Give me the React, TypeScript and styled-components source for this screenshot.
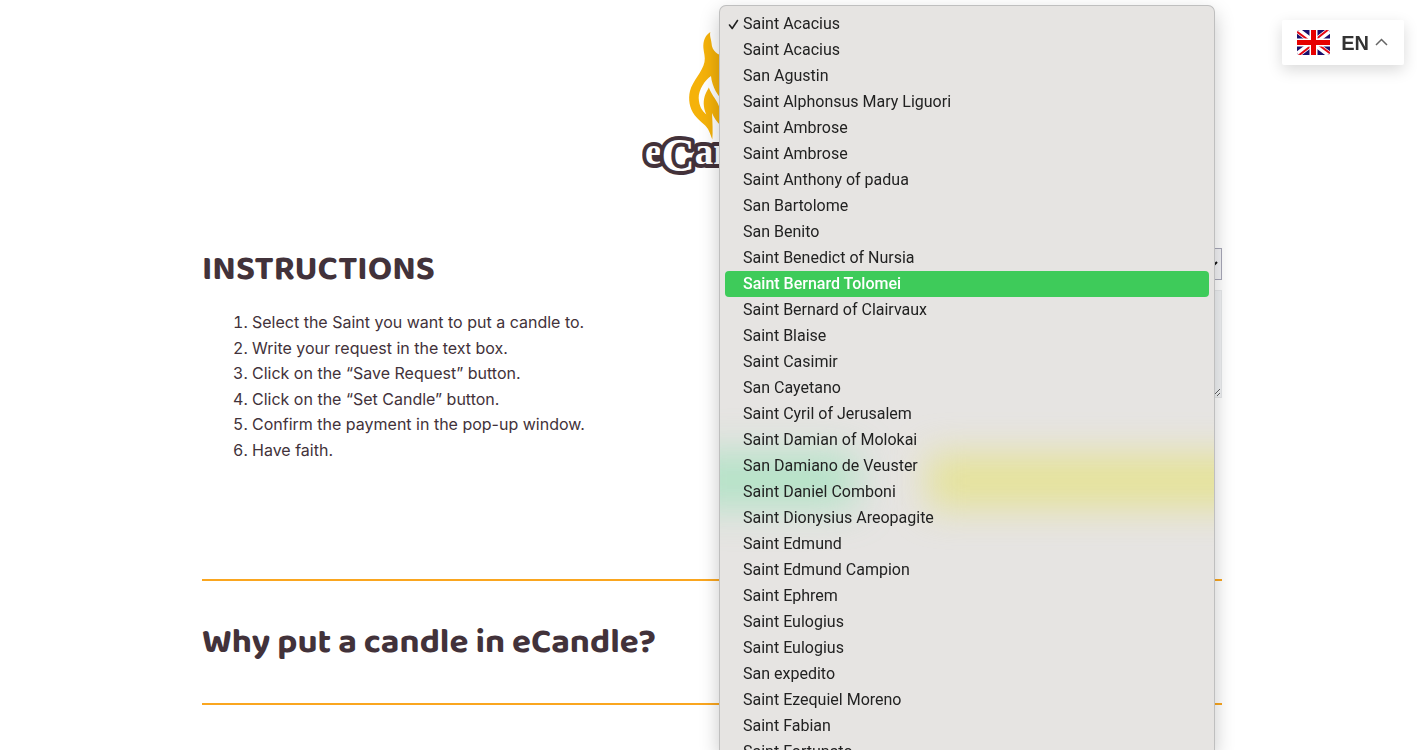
import React from "react";
import styled, { createGlobalStyle } from "styled-components";

const GlobalStyle = createGlobalStyle`
  *, *::before, *::after { box-sizing: border-box; }
  body {
    margin: 0;
    background: #fff;
    color: #42323a;
    font-family: Inter, "Liberation Sans", sans-serif;
    font-size: 16px;
    overflow: hidden;
  }
`;

const Page = styled.div`
  height: 100vh;
  overflow: hidden;
  padding-left: 7px;
`;

const Container = styled.main`
  width: 100%;
  max-width: 1020px;
  margin: 0 auto;
`;

const Header = styled.header`
  display: flex;
  justify-content: center;
  padding: 30px 0 68px;
`;

const Logo = styled.svg`
  display: block;
  width: 140px;
  height: 150px;
`;

const Columns = styled.section`
  display: grid;
  grid-template-columns: 1fr 1fr;
  gap: 20px;
  min-height: 331px;
`;

const Heading = styled.h2`
  margin: 0;
  font-family: "Baloo 2", Inter, sans-serif;
  font-size: 35px;
  font-weight: 700;
  line-height: 42px;
`;

const Steps = styled.ol`
  margin: 20px 0 0;
  padding-left: 50px;
  font-size: 16px;
  line-height: 1.6;
`;

const Form = styled.form`
  display: flex;
  flex-direction: column;
  gap: 10px;
`;

const SelectField = styled.div`
  display: grid;
  align-items: center;
  justify-items: end;
`;

const Select = styled.select`
  grid-area: 1 / 1;
  width: 100%;
  height: 32px;
  appearance: none;
  padding: 0 24px 0 8px;
  border: 1px solid #a8a8b8;
  border-radius: 0;
  background: #f3f3f6;
  font: inherit;
`;

const SelectArrow = styled.svg`
  grid-area: 1 / 1;
  width: 10px;
  height: 6px;
  margin-right: 4px;
  pointer-events: none;
`;

const Request = styled.textarea`
  display: block;
  width: 100%;
  height: 108px;
  border: 1px solid #e6e8ea;
  background: #f0f2f4;
  resize: vertical;
`;

const Question = styled.section`
  border-top: 2px solid #faa61f;
  padding: 40px 0;

  &:last-child { padding-bottom: 0; }
`;

const Menu = styled.ul`
  position: fixed;
  z-index: 2;
  top: 5px;
  width: 496px;
  height: calc(100vh - 5px);
  margin: 0 0 0 -3px;
  padding: 5px 5px 0;
  overflow: hidden;
  list-style: none;
  background: #e6e4e2;
  border: 1px solid #bfbfbf;
  border-bottom: 0;
  border-radius: 7px 7px 0 0;
  box-shadow: 0 8px 20px rgba(0, 0, 0, 0.22);
`;

const MenuAnchor = styled.div`
  grid-area: 1 / 1;
  justify-self: start;
`;

const Glow = styled.li<{ $color: string; $left: number; $top: number; $width: number; $height: number; $blur: number }>`
  position: absolute;
  left: ${(p) => p.$left}px;
  top: ${(p) => p.$top}px;
  width: ${(p) => p.$width}px;
  height: ${(p) => p.$height}px;
  background: ${(p) => p.$color};
  filter: blur(${(p) => p.$blur}px);
`;

const Option = styled.li<{ $active?: boolean }>`
  position: relative;
  height: 26px;
  padding-left: 18px;
  border-radius: 4px;
  font-family: Roboto, Inter, sans-serif;
  font-size: 16px;
  font-weight: ${(p) => (p.$active ? 500 : 400)};
  line-height: 25px;
  color: ${(p) => (p.$active ? "#fff" : "#222")};
  background: ${(p) => (p.$active ? "#3ecb5a" : "transparent")};
`;

const Check = styled.svg`
  position: absolute;
  left: 3px;
  top: 8px;
  width: 11px;
  height: 11px;
`;

const Language = styled.button`
  position: fixed;
  z-index: 3;
  top: 20px;
  right: 13px;
  display: flex;
  align-items: center;
  height: 45px;
  padding: 0 16px 0 15px;
  border: 0;
  border-radius: 2px;
  background: #fff;
  box-shadow: 0 5px 15px rgba(0, 0, 0, 0.15);
  color: #333;
  font: bold 20px/24px "Liberation Sans", sans-serif;
`;

const Flag = styled.svg`
  width: 33px;
  height: 25px;
  margin-right: 11px;
`;

const Caret = styled.svg`
  width: 13px;
  height: 8px;
  margin: 0 0 2px 6px;
`;

const saints = [
  "Saint Acacius",
  "Saint Acacius",
  "San Agustin",
  "Saint Alphonsus Mary Liguori",
  "Saint Ambrose",
  "Saint Ambrose",
  "Saint Anthony of padua",
  "San Bartolome",
  "San Benito",
  "Saint Benedict of Nursia",
  "Saint Bernard Tolomei",
  "Saint Bernard of Clairvaux",
  "Saint Blaise",
  "Saint Casimir",
  "San Cayetano",
  "Saint Cyril of Jerusalem",
  "Saint Damian of Molokai",
  "San Damiano de Veuster",
  "Saint Daniel Comboni",
  "Saint Dionysius Areopagite",
  "Saint Edmund",
  "Saint Edmund Campion",
  "Saint Ephrem",
  "Saint Eulogius",
  "Saint Eulogius",
  "San expedito",
  "Saint Ezequiel Moreno",
  "Saint Fabian",
  "Saint Fortunato",
];

const steps = [
  "Select the Saint you want to put a candle to.",
  "Write your request in the text box.",
  "Click on the “Save Request” button.",
  "Click on the “Set Candle” button.",
  "Confirm the payment in the pop-up window.",
  "Have faith.",
];

const SELECTED = 0;
const HIGHLIGHTED = 10;

function CandleLogo() {
  return (
    <Logo viewBox="0 0 140 150" role="img" aria-label="eCandle">
      <path
        fill="#f5b20a"
        fillRule="evenodd"
        d="M68.3 2C63 5.500 61 11 61.400 18C61.800 23 63.500 27 62.500 32C60.500 42 50.500 51 48 61C46 69 47.500 78 52.500 85C57 91 63 94 66 99C68 103 69 106 70.300 109.500C71 102 70.500 92 70 83C72 88 75 92 78 95L91 82C95 68 87 50 82 40L82 27C76 24 70 22 69.500 13C69 8 67.500 6 68.300 2Z
        M69 46C63 50 56.500 60 56.700 68C57 76 60 81 64.300 84.500C61 77 61 70 63.500 64C64.500 61.500 66 59.500 66.800 57.500C70 66 76 71 77.500 78L82 78L82 72C76 66 70 57 69 46Z"
      />
      <text
        x="3"
        y="134"
        fontFamily="'Liberation Serif', serif"
        fontWeight="bold"
        fontSize="37"
        fill="#fff"
        stroke="#43323a"
        strokeWidth="8"
        strokeLinejoin="round"
        paintOrder="stroke"
      >
        e
        <tspan dy="7" fontSize="46">C</tspan>
        <tspan dy="-7">andle</tspan>
      </text>
    </Logo>
  );
}

function UnionJack() {
  return (
    <Flag viewBox="0 0 33 25" aria-hidden="true">
      <clipPath id="flag-shape">
        <rect width="33" height="25" rx="3" />
      </clipPath>
      <g clipPath="url(#flag-shape)">
        <rect width="33" height="25" fill="#1a0e6b" />
        <path d="M0 0L33 25M33 0L0 25" stroke="#fff" strokeWidth="6" />
        <path d="M-1 1L16 13.500M34 24L17 11.500M32 -1L16 11.500M1 26L17 13.500" stroke="#e30613" strokeWidth="2" />
        <path d="M16.500 0V25M0 12.500H33" stroke="#fff" strokeWidth="8" />
        <path d="M16.500 0V25M0 12.500H33" stroke="#e60000" strokeWidth="5" />
      </g>
    </Flag>
  );
}

export default function App() {
  return (
    <>
      <GlobalStyle />
      <Page>
        <Container>
          <Header>
            <CandleLogo />
          </Header>
          <Columns>
            <div>
              <Heading>INSTRUCTIONS</Heading>
              <Steps>
                {steps.map((step) => (
                  <li key={step}>{step}</li>
                ))}
              </Steps>
            </div>
            <Form>
              <SelectField>
                <Select aria-label="Saint" defaultValue={SELECTED}>
                  {saints.map((saint, i) => (
                    <option key={i} value={i}>
                      {saint}
                    </option>
                  ))}
                </Select>
                <SelectArrow viewBox="0 0 10 6" aria-hidden="true">
                  <path d="M1 1L5 5L9 1" fill="none" stroke="#111" strokeWidth="2" />
                </SelectArrow>
                <MenuAnchor>
                  <Menu role="listbox" aria-label="Saint">
                    <Glow role="presentation" $color="rgba(120, 226, 168, 0.5)" $left={-40} $top={449} $width={176} $height={50} $blur={20} />
                    <Glow role="presentation" $color="rgba(230, 226, 100, 0.58)" $left={208} $top={448} $width={330} $height={54} $blur={18} />
                    {saints.map((saint, i) => (
                      <Option key={i} role="option" aria-selected={i === SELECTED} $active={i === HIGHLIGHTED}>
                        {i === SELECTED && (
                          <Check viewBox="0 0 11 11" aria-hidden="true">
                            <path d="M1.500 6L4.200 9.500L9.500 1.500" fill="none" stroke="#222" strokeWidth="1.600" strokeLinecap="round" strokeLinejoin="round" />
                          </Check>
                        )}
                        {saint}
                      </Option>
                    ))}
                  </Menu>
                </MenuAnchor>
              </SelectField>
              <Request aria-label="Request" />
            </Form>
          </Columns>
          <Question>
            <Heading>Why put a candle in eCandle?</Heading>
          </Question>
          <Question />
        </Container>
      </Page>
      <Language type="button">
        <UnionJack />
        EN
        <Caret viewBox="0 0 13 8" aria-hidden="true">
          <path d="M1 7L6.500 1.500L12 7" fill="none" stroke="#666" strokeWidth="1.500" />
        </Caret>
      </Language>
    </>
  );
}
